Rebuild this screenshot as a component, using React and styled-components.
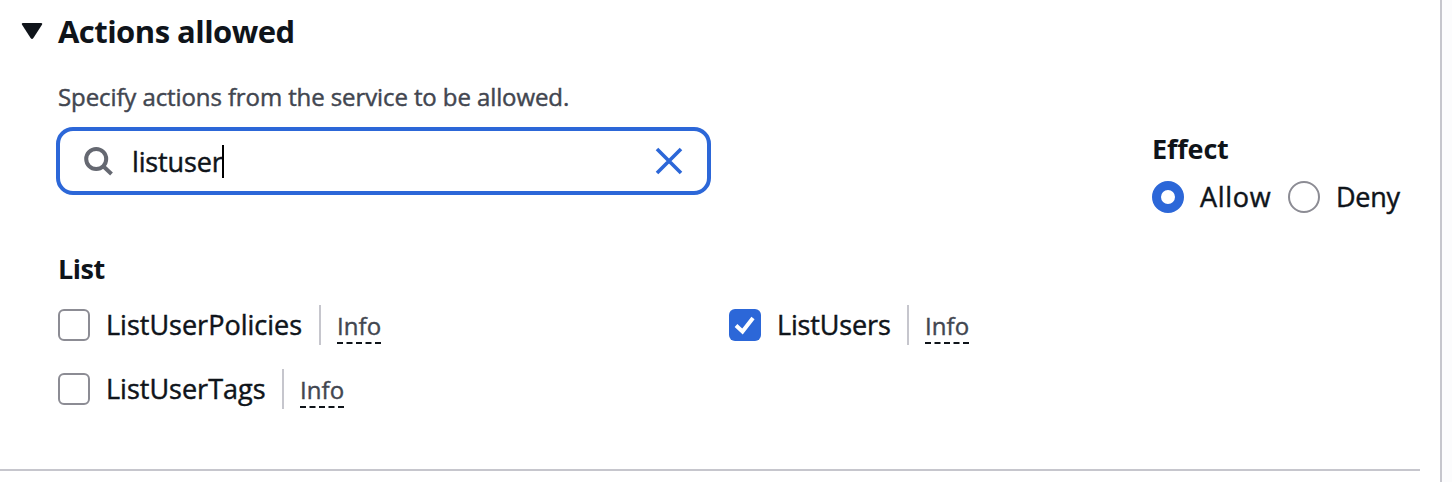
import React from "react";
import styled, { createGlobalStyle } from "styled-components";

const Global = createGlobalStyle`
  * { box-sizing: border-box; }
  body {
    margin: 0;
    background: #fcfcfd;
    color: #0f141a;
    font-family: "Open Sans", "Noto Sans", sans-serif;
    font-size: 27px;
    overflow: hidden;
  }
`;

const Panel = styled.main`
  width: 1442px;
  height: 482px;
  background: #fff;
  border-right: 2px solid #c6c6cd;
`;

const Section = styled.section`
  width: 1420px;
  height: 471px;
  padding: 7px 0 0 20px;
  border-bottom: 2px solid #c6c6cd;
`;

const Header = styled.header`
  display: flex;
  align-items: center;
  height: 48px;
`;

const Caret = styled.svg`
  width: 24px;
  height: 20px;
  margin: -1px 14px 0 0;
  fill: #0f141a;
`;

const Text = styled.span`
  line-height: 40px;
  white-space: nowrap;
  letter-spacing: ${(p) => p.$track || 0}px;
  -webkit-text-stroke: 0.45px currentColor;
`;

const Title = styled(Text).attrs({ as: "h2" })`
  margin: 0;
  font-size: 31px;
  font-weight: 700;
  -webkit-text-stroke: 0;
`;

const Heading = styled(Text).attrs({ as: "h3" })`
  margin: 0;
  font-size: 27px;
  font-weight: 700;
  -webkit-text-stroke: 0;
`;

const Hint = styled(Text).attrs({ as: "p" })`
  margin: 0;
  font-size: 24px;
  color: #424650;
`;

const Body = styled.div`
  padding: 22px 20px 0 38px;
`;

const Filters = styled.div`
  display: flex;
  justify-content: space-between;
  margin-left: -2px;
  margin-top: 10px;
  height: 68px;
`;

const SearchBox = styled.div`
  display: flex;
  align-items: center;
  width: 655px;
  height: 68px;
  padding: 0 24px;
  border: 4px solid #2c67d8;
  border-radius: 17px;
`;

const SearchIcon = styled.svg`
  width: 32px;
  height: 32px;
  margin-right: 16px;
  fill: none;
  stroke: #656871;
  stroke-width: 4;
`;

const Query = styled(Text)`
  padding-top: 2px;
`;

const Cursor = styled.i`
  width: 2px;
  height: 33px;
  margin-left: -1px;
  background: #000;
`;

const ClearIcon = styled.svg`
  width: 28px;
  height: 28px;
  margin: -1px 0 0 auto;
  stroke: #2c67d8;
  stroke-width: 3.6;
`;

const Effect = styled.div`
  width: 248px;
  padding-top: 2px;
`;

const Radios = styled.div`
  display: flex;
  align-items: center;
  margin-top: 8px;
`;

const Option = styled.label`
  display: flex;
  align-items: center;
  gap: 16px;
  width: ${(p) => p.$width || "auto"};
`;

const Radio = styled.span`
  flex: none;
  width: 32px;
  height: 32px;
  border-radius: 50%;
  border: ${(p) => (p.$on ? "9.5px solid #2c67d8" : "2px solid #8c8c94")};
  background: #fff;
`;

const ListHeading = styled(Heading)`
  margin-top: 54px;
`;

const Actions = styled.div`
  display: grid;
  grid-template-columns: 671px 1fr;
  grid-auto-rows: 40px;
  row-gap: 24px;
  margin-top: 16px;
`;

const Action = styled.div`
  display: flex;
  align-items: center;
`;

const Check = styled.span`
  flex: none;
  display: flex;
  width: 32px;
  height: 32px;
  border-radius: 6px;
  border: ${(p) => (p.$on ? "0" : "2px solid #8c8c94")};
  background: ${(p) => (p.$on ? "#2c67d8" : "#fff")};
`;

const Tick = styled.svg`
  width: 32px;
  height: 32px;
  fill: none;
  stroke: #fff;
  stroke-width: 4;
`;

const Divider = styled.i`
  width: 2px;
  height: 40px;
  margin: 0 16px;
  background: #c6c6cd;
`;

const Info = styled.a`
  position: relative;
  width: 44px;
  height: 38px;
  font-size: 24px;
  line-height: 40px;
  letter-spacing: 0.1px;
  white-space: nowrap;
  color: #424650;
  -webkit-text-stroke: 0.4px currentColor;
`;

const Dashes = styled.svg`
  position: absolute;
  left: 0;
  bottom: 0;
  width: 44px;
  height: 2px;
  stroke: #0f141a;
  stroke-width: 2;
  stroke-dasharray: 6 3.5;
`;

function ActionItem({ name, width, track, checked }) {
  return (
    <Action>
      <Option $width={width}>
        <Check $on={checked}>
          {checked && (
            <Tick viewBox="0 0 32 32">
              <path d="M7 16.5l6.5 6L24 9" />
            </Tick>
          )}
        </Check>
        <Text $track={track}>{name}</Text>
      </Option>
      <Divider />
      <Info>
        Info
        <Dashes viewBox="0 0 44 2">
          <path d="M0 1H44" />
        </Dashes>
      </Info>
    </Action>
  );
}

export default function App() {
  return (
    <>
      <Global />
      <Panel>
        <Section>
          <Header>
            <Caret viewBox="0 0 24 20">
              <path d="M3 2H21Q23 2 21.8 4L13.4 17Q12 18.8 10.6 17L2.2 4Q1 2 3 2Z" />
            </Caret>
            <Title $track={-0.53}>Actions allowed</Title>
          </Header>
          <Body>
            <Hint $track={-0.1}>Specify actions from the service to be allowed.</Hint>
            <Filters>
              <SearchBox>
                <SearchIcon viewBox="0 0 32 32">
                  <circle cx="12.2" cy="14" r="10" />
                  <path d="M19 21l8.5 8" />
                </SearchIcon>
                <Query $track={-0.15}>listuser</Query>
                <Cursor />
                <ClearIcon viewBox="0 0 28 28">
                  <path d="M2 2L26 26M26 2L2 26" />
                </ClearIcon>
              </SearchBox>
              <Effect>
                <Heading $track={-0.15}>Effect</Heading>
                <Radios>
                  <Option $width="136px">
                    <Radio $on />
                    <Text $track={0.7}>Allow</Text>
                  </Option>
                  <Option>
                    <Radio />
                    <Text $track={-0.3}>Deny</Text>
                  </Option>
                </Radios>
              </Effect>
            </Filters>
            <ListHeading $track={-0.5}>List</ListHeading>
            <Actions>
              <ActionItem name="ListUserPolicies" width="245px" track={0} />
              <ActionItem name="ListUsers" width="162px" track={-0.15} checked />
              <ActionItem name="ListUserTags" width="208px" track={0} />
            </Actions>
          </Body>
        </Section>
      </Panel>
    </>
  );
}
